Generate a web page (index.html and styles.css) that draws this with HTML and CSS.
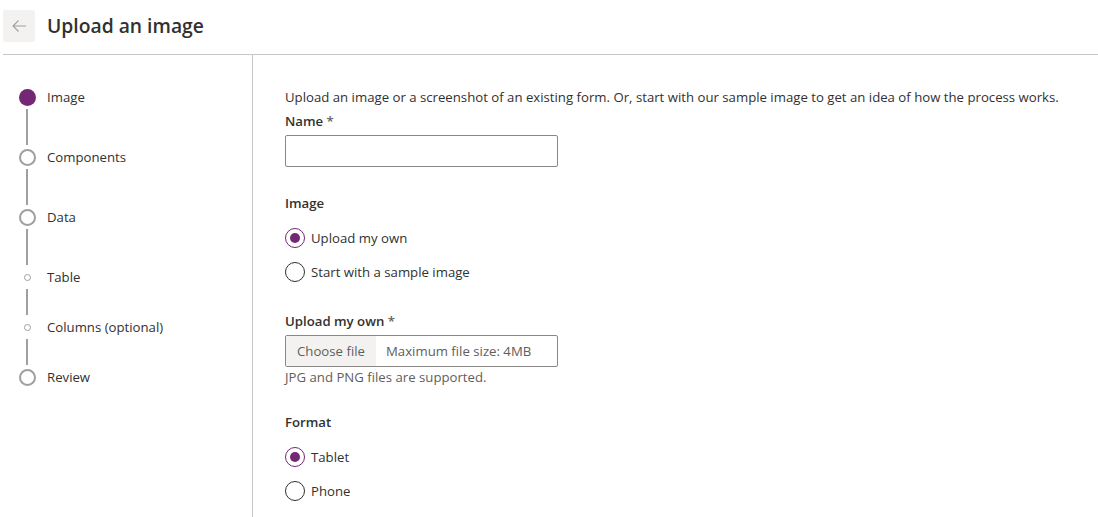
FILE: index.html
```html
<!DOCTYPE html>
<html lang="en">
<head>
<meta charset="utf-8">
<title>Upload an image</title>
<link rel="stylesheet" href="styles.css">
</head>
<body>
<header class="header">
  <button class="back" aria-label="Back">
    <svg width="16" height="16" viewBox="0 0 16 16"><path d="M15 8H2M7.5 2.5L2 8l5.5 5.5" fill="none" stroke="#a19f9d" stroke-width="1.1"/></svg>
  </button>
  <h1 class="title">Upload an image</h1>
</header>
<div class="body">
  <nav class="steps">
    <div class="step current"><span class="dot"><span class="ring filled"></span></span><span class="label">Image</span></div>
    <div class="line l60"></div>
    <div class="step"><span class="dot"><span class="ring"></span></span><span class="label">Components</span></div>
    <div class="line l60"></div>
    <div class="step"><span class="dot"><span class="ring"></span></span><span class="label">Data</span></div>
    <div class="line l60"></div>
    <div class="step"><span class="dot"><span class="pip"></span></span><span class="label">Table</span></div>
    <div class="line l50"></div>
    <div class="step"><span class="dot"><span class="pip"></span></span><span class="label">Columns (optional)</span></div>
    <div class="line l50"></div>
    <div class="step"><span class="dot"><span class="ring"></span></span><span class="label">Review</span></div>
  </nav>
  <main class="main">
    <p class="intro">Upload an image or a screenshot of an existing form. Or, start with our sample image to get an idea of how the process works.</p>
    <div class="field">
      <label class="flabel">Name <span class="req">*</span></label>
      <input class="textbox" type="text">
    </div>
    <div class="group g-image">
      <div class="flabel">Image</div>
      <div class="radios">
        <div class="radio checked"><span class="circle"></span><span>Upload my own</span></div>
        <div class="radio"><span class="circle"></span><span>Start with a sample image</span></div>
      </div>
    </div>
    <div class="group g-upload">
      <div class="flabel">Upload my own <span class="req">*</span></div>
      <div class="filebox"><span class="choose">Choose file</span><span class="hint">Maximum file size: 4MB</span></div>
      <div class="note">JPG and PNG files are supported.</div>
    </div>
    <div class="group g-format">
      <div class="flabel">Format</div>
      <div class="radios">
        <div class="radio checked"><span class="circle"></span><span>Tablet</span></div>
        <div class="radio"><span class="circle"></span><span>Phone</span></div>
      </div>
    </div>
  </main>
</div>
</body>
</html>
```
FILE: styles.css
```css
* { box-sizing: border-box; }
html, body { margin: 0; padding: 0; background: #fff; }
body {
  font-family: "Open Sans", "Noto Sans", sans-serif;
  font-size: 13.2px;
  color: #323130;
  overflow: hidden;
  height: 517px;
}
.header {
  display: flex;
  align-items: center;
  height: 55px;
  margin-left: 3px;
  border-bottom: 1px solid #c8c6c4;
}
.back {
  width: 32px;
  height: 32px;
  border: none;
  border-radius: 2px;
  background: #f3f2f1;
  display: flex;
  align-items: center;
  justify-content: center;
  padding: 0;
  margin-top: -2px;
}
.title {
  margin: -3px 0 0 12px;
  font-size: 19.3px;
  font-weight: 600;
  color: #323130;
}
.body {
  display: flex;
  height: 462px;
}
.steps {
  width: 253px;
  border-right: 1px solid #c8c6c4;
  padding: 33px 0 0 18px;
  display: flex;
  flex-direction: column;
}
.step {
  display: flex;
  align-items: center;
  height: 18px;
  flex: none;
}
.dot {
  width: 18px;
  height: 18px;
  display: flex;
  align-items: center;
  justify-content: center;
  flex: none;
}
.ring {
  display: block;
  width: 17px;
  height: 17px;
  border-radius: 50%;
  border: 2px solid #a19f9d;
  flex: none;
}
.ring.filled {
  border: none;
  background: #742774;
}
.pip {
  display: block;
  width: 7px;
  height: 7px;
  border-radius: 50%;
  border: 1.5px solid #a19f9d;
  flex: none;
}
.label {
  margin-left: 11px;
  color: #323130;
}
.line {
  width: 2px;
  background: #a19f9d;
  margin-left: 8px;
  margin-top: 3px;
  margin-bottom: 3px;
  flex: none;
}
.line.l60 { height: 36px; }
.line.l50 { height: 26px; }

.main {
  padding: 32px 0 0 32px;
  flex: 1;
}
.intro {
  margin: 0;
  line-height: 20px;
}
.flabel {
  font-weight: 600;
  line-height: 20px;
  display: block;
}
.req { font-weight: 600; color: #605e5c; }
.field { margin-top: 4px; }
.textbox {
  display: block;
  width: 273px;
  height: 32px;
  border: 1px solid #8a8886;
  border-radius: 2px;
  margin-top: 4px;
  font: inherit;
}
.group { margin-top: 26px; }
.radios {
  display: flex;
  flex-direction: column;
  gap: 14px;
  margin-top: 15px;
}
.radio {
  display: flex;
  align-items: center;
  height: 20px;
  gap: 6px;
}
.circle {
  width: 20px;
  height: 20px;
  border-radius: 50%;
  border: 1px solid #323130;
  display: flex;
  align-items: center;
  justify-content: center;
  flex: none;
}
.radio.checked .circle { border-color: #742774; }
.radio.checked .circle::before {
  content: "";
  width: 10px;
  height: 10px;
  border-radius: 50%;
  background: #742774;
}
.g-upload { margin-top: 29px; }
.filebox {
  display: flex;
  width: 273px;
  height: 32px;
  border: 1px solid #8a8886;
  border-radius: 2px;
  margin-top: 4px;
  overflow: hidden;
}
.choose {
  background: #f3f2f1;
  width: 90px;
  display: flex;
  align-items: center;
  justify-content: center;
  color: #605e5c;
}
.hint {
  display: flex;
  align-items: center;
  padding-left: 10px;
  color: #605e5c;
}
.note {
  color: #605e5c;
  line-height: 20px;
}
.g-format { margin-top: 25px; }
```
